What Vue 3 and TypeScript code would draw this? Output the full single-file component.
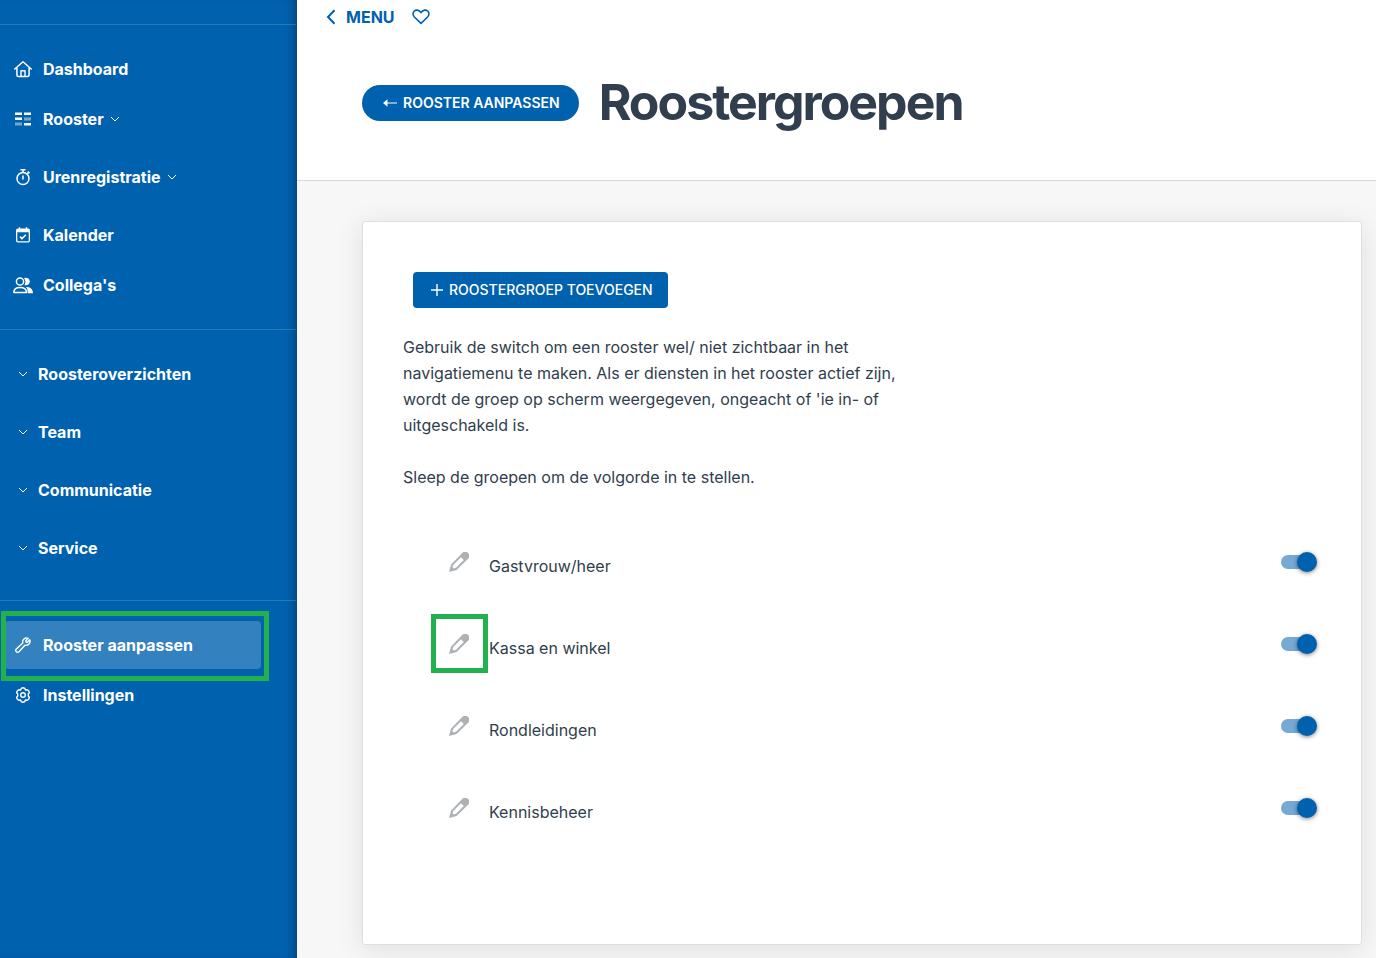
<script setup lang="ts">
import { ref } from 'vue'

interface NavItem {
  label: string
  icon: string
  expandable?: boolean
  active?: boolean
}

interface RosterGroup {
  id: string
  name: string
  visible: boolean
  marked?: boolean
}

const mainItems: NavItem[] = [
  { label: 'Dashboard', icon: 'home' },
  { label: 'Rooster', icon: 'roster', expandable: true },
  { label: 'Urenregistratie', icon: 'timer', expandable: true },
  { label: 'Kalender', icon: 'calendar' },
  { label: "Collega's", icon: 'people' },
]

const sections: string[] = ['Roosteroverzichten', 'Team', 'Communicatie', 'Service']

const adminItems: NavItem[] = [
  { label: 'Rooster aanpassen', icon: 'wrench', active: true },
  { label: 'Instellingen', icon: 'gear' },
]

const groups = ref<RosterGroup[]>([
  { id: 'gastvrouw', name: 'Gastvrouw/heer', visible: true },
  { id: 'kassa', name: 'Kassa en winkel', visible: true, marked: true },
  { id: 'rondleidingen', name: 'Rondleidingen', visible: true },
  { id: 'kennisbeheer', name: 'Kennisbeheer', visible: true },
])
</script>

<template>
  <div class="layout">
    <aside class="sidebar">
      <nav>
        <ul class="nav-list">
          <li v-for="item in mainItems" :key="item.label" :class="{ group: item.expandable }">
            <component
              :is="item.expandable ? 'button' : 'a'"
              class="nav-item"
              :href="item.expandable ? undefined : '#'"
              :type="item.expandable ? 'button' : undefined"
            >
              <span class="nav-icon">
                <svg v-if="item.icon === 'home'" width="18" height="18" viewBox="0 0 18 18" fill="none" stroke="currentColor" stroke-width="1.5" stroke-linecap="round" stroke-linejoin="round" aria-hidden="true">
                  <path d="M.8 9 9 1.8 17.200 9M2.900 7.500V15a1.500 1.500 0 0 0 1.500 1.500h9.200a1.500 1.500 0 0 0 1.500-1.500V7.500" />
                  <path d="M7 16.300v-5.500h4v5.500" stroke-width="1.400" />
                </svg>
                <svg v-else-if="item.icon === 'roster'" width="16" height="14" viewBox="0 0 16 14" fill="currentColor" aria-hidden="true">
                  <path d="M0 .5h7V3H0zM9 .5h7V3H9zM0 5.500h7V8H0zM9 11h7v2.500H9z" />
                  <path d="M9 5.500h7v3H9zM0 10.500h7v3H0z" opacity=".45" />
                </svg>
                <svg v-else-if="item.icon === 'timer'" width="16" height="18" viewBox="0 0 16 18" fill="none" stroke="currentColor" stroke-width="1.500" aria-hidden="true">
                  <circle cx="8" cy="10.500" r="6" />
                  <path d="M5.500 1.700h5M8 1.500v3M8 7.500v4M12.200 5.800l1.500-1.500M12.800 3.500l1.700 1.700" />
                </svg>
                <svg v-else-if="item.icon === 'calendar'" width="16" height="16" viewBox="0 0 16 16" fill="none" aria-hidden="true">
                  <path d="M4.500.2v2.500M11.500.2v2.500" stroke="currentColor" stroke-width="1.500" />
                  <path d="M3 1.500h10a2 2 0 0 1 2 2v10a2 2 0 0 1-2 2H3a2 2 0 0 1-2-2v-10a2 2 0 0 1 2-2zM2.300 5.200v8.200c0 .5.300.8.8.8h9.800c.5 0 .8-.3.800-.8V5.200z" fill="currentColor" fill-rule="evenodd" />
                  <path d="m5 9.600 2 2 3.800-3.700" stroke="currentColor" stroke-width="1.500" />
                </svg>
                <svg v-else width="20" height="17" viewBox="0 0 20 17" fill="none" aria-hidden="true">
                  <circle cx="7" cy="4.500" r="3.600" stroke="currentColor" stroke-width="1.500" />
                  <path d="M.8 15.500c0-3 2-5 6.200-5s6.500 2 6.500 5z" stroke="currentColor" stroke-width="1.500" stroke-linejoin="round" />
                  <path d="M11 1.200c3-1.200 5.800.6 5.800 3.400 0 2.700-2.600 4.400-5.300 3.500 1.300-1.900 1.400-4.800-.5-6.900zM13 9.900c4.500-.2 7 2.100 7 6.300h-5.300c.1-2.600-.3-4.700-1.700-6.300z" fill="currentColor" />
                </svg>
              </span>
              {{ item.label }}
              <svg v-if="item.expandable" class="caret" width="10" height="6" viewBox="0 0 10 6" fill="none" stroke="currentColor" aria-hidden="true"><path d="m1 1 4 4 4-4" /></svg>
            </component>
          </li>
        </ul>
        <ul class="nav-list">
          <li v-for="section in sections" :key="section" class="group">
            <button type="button" class="nav-item section">
              <span class="nav-icon">
                <svg width="10" height="6" viewBox="0 0 10 6" fill="none" stroke="currentColor" aria-hidden="true"><path d="m1 1 4 4 4-4" /></svg>
              </span>
              {{ section }}
            </button>
          </li>
        </ul>
        <ul class="nav-list">
          <li v-for="item in adminItems" :key="item.label" class="admin">
            <a href="#" class="nav-item" :class="{ active: item.active }">
              <span class="nav-icon">
                <svg v-if="item.icon === 'wrench'" width="16" height="16" viewBox="0 0 16 16" fill="none" stroke="currentColor" stroke-width="1.400" stroke-linejoin="round" aria-hidden="true">
                  <path d="M13.200 1.300a4 4 0 0 0-5.400 4.800L1.300 12a1.900 1.900 0 1 0 2.700 2.700l5.900-6.500a4 4 0 0 0 4.800-5.400L12.300 5.200l-1.300-.2-.2-1.300z" />
                </svg>
                <svg v-else width="16" height="16" viewBox="0 0 16 16" fill="none" stroke="currentColor" stroke-width="1.400" stroke-linejoin="round" aria-hidden="true">
                  <path d="M6.300 1.300Q8 .2 9.700 1.300L10.400 3 12.300 2.800Q14.200 3.600 14.400 5.500L13.300 7v2l1.100 1.500q-.2 1.900-2.100 2.700L10.400 13l-.7 1.700q-1.700 1.100-3.400 0L5.600 13l-1.900.2Q1.800 12.400 1.600 10.500L2.700 9V7L1.600 5.500Q1.800 3.600 3.700 2.800L5.600 3z" />
                  <circle cx="8" cy="8" r="2.300" />
                </svg>
              </span>
              {{ item.label }}
            </a>
            <span v-if="item.active" class="marker nav-marker"></span>
          </li>
        </ul>
      </nav>
    </aside>

    <main class="content">
      <header class="page-header">
        <div class="topbar">
          <button type="button" class="menu-button">
            <svg width="10" height="16" viewBox="0 0 10 16" fill="none" stroke="currentColor" stroke-width="2" aria-hidden="true"><path d="M8.500 1.200 2 8l6.500 6.800" /></svg>
            MENU
          </button>
          <button type="button" class="heart-button" aria-label="Favoriet">
            <svg width="18" height="16" viewBox="0 0 18 16" fill="none" stroke="currentColor" stroke-width="1.600" stroke-linejoin="round" aria-hidden="true">
              <path d="M9 14.300 2.400 8C.6 6.200.6 3.800 2.100 2.300 3.900.5 7.100.6 9 3.600 10.900.6 14.100.5 15.900 2.300c1.500 1.500 1.500 3.900-.3 5.700z" />
            </svg>
          </button>
        </div>
        <div class="title-row">
          <a href="#" class="back-button">
            <svg width="14" height="8" viewBox="0 0 14 8" fill="currentColor" aria-hidden="true"><path d="M0 4 4.500.3v3.100H14v1.200H4.500v3.100z" /></svg>
            ROOSTER AANPASSEN
          </a>
          <h1>Roostergroepen</h1>
        </div>
      </header>

      <section class="card">
        <button type="button" class="add-button">
          <svg width="12" height="12" viewBox="0 0 12 12" fill="none" stroke="currentColor" stroke-width="1.400" aria-hidden="true"><path d="M6 0v12M0 6h12" /></svg>
          ROOSTERGROEP TOEVOEGEN
        </button>
        <p>
          Gebruik de switch om een rooster wel/ niet zichtbaar in het navigatiemenu te maken. Als er
          diensten in het rooster actief zijn, wordt de groep op scherm weergegeven, ongeacht of 'ie
          in- of uitgeschakeld is.
        </p>
        <p>Sleep de groepen om de volgorde in te stellen.</p>
        <ul class="group-list">
          <li v-for="group in groups" :key="group.id">
            <button type="button" class="edit-button" :aria-label="`${group.name} bewerken`">
              <svg width="20" height="20" viewBox="0 0 20 20" fill="currentColor" aria-hidden="true">
                <path d="M13.200.9a3.500 3.500 0 0 1 5.900 5.900L7.600 17.900 0 20l2.100-7.600zM12 5.200 4.200 13l-.7 2.200 1.300 1.300 2.200-.7L14.800 8z" fill-rule="evenodd" />
              </svg>
              <span v-if="group.marked" class="marker edit-marker"></span>
            </button>
            <label :for="group.id">{{ group.name }}</label>
            <input :id="group.id" v-model="group.visible" type="checkbox" role="switch" class="switch" />
          </li>
        </ul>
      </section>
    </main>
  </div>
</template>

<style>
body {
  margin: 0;
  background: #f7f7f7;
}
</style>

<style scoped>
.layout {
  display: flex;
  min-height: 100vh;
  font-family: Inter, "Liberation Sans", sans-serif;
  font-size: 16px;
  color: #303e4d;
}

button {
  border: 0;
  background: none;
  font: inherit;
  color: inherit;
  cursor: pointer;
}

a {
  color: inherit;
  text-decoration: none;
}

svg {
  display: block;
  flex: none;
}

ul {
  list-style: none;
  margin: 0;
  padding: 0;
}

.sidebar {
  flex: none;
  box-sizing: border-box;
  width: 297px;
  padding-top: 24px;
  background: #0061af;
  color: #fff;
  box-shadow: inset -8px 0 8px -4px rgba(0, 0, 0, 0.26);
}

.nav-list {
  display: flex;
  flex-direction: column;
  gap: 2px;
  margin-right: 1px;
  padding: 20px 35px 20px 5px;
  border-top: 1px solid rgba(255, 255, 255, 0.16);
}

.group {
  margin-bottom: 8px;
}

.admin {
  position: relative;
}

.nav-item {
  display: flex;
  align-items: center;
  box-sizing: border-box;
  width: 100%;
  height: 48px;
  padding: 0 8px;
  border-radius: 4px;
  font-weight: 700;
  text-align: left;
}

.nav-item.active {
  background: #3381bf;
}

.nav-icon {
  display: flex;
  justify-content: center;
  width: 20px;
  margin-right: 10px;
}

.section .nav-icon {
  margin-right: 5px;
}

.caret {
  margin-left: 6px;
}

.marker {
  position: absolute;
  border: 5px solid #22b14c;
  pointer-events: none;
}

.nav-marker {
  inset: -10px -8px -12px -4px;
}

.content {
  flex: 1;
  min-width: 0;
  display: flex;
  flex-direction: column;
}

.page-header {
  padding-bottom: 47px;
  border-bottom: 1px solid #d9d9d9;
  background: #fff;
}

.topbar {
  display: flex;
  align-items: center;
  gap: 17px;
  height: 34px;
  padding-left: 29px;
  color: #0061af;
}

.menu-button {
  display: flex;
  align-items: center;
  gap: 10px;
  padding: 0;
  font-weight: 700;
}

.heart-button {
  padding: 0;
}

.title-row {
  display: flex;
  align-items: center;
  gap: 20px;
  padding: 39px 15px 0 65px;
}

.back-button {
  display: flex;
  align-items: center;
  box-sizing: border-box;
  gap: 6px;
  height: 36px;
  padding: 0 19px 1px 21px;
  border-radius: 18px;
  background: #0061af;
  color: #fff;
  font-size: 14px;
  font-weight: 600;
  white-space: nowrap;
}

h1 {
  margin: 0;
  padding-bottom: 2px;
  font-size: 50px;
  line-height: 58px;
  font-weight: 700;
  letter-spacing: -2px;
}

.card {
  flex: 1;
  margin: 40px 14px 13px 65px;
  padding: 40px;
  border: 1px solid #dfdfdf;
  border-radius: 3px;
  background: #fff;
  box-shadow: 0 4px 28px rgba(0, 0, 0, 0.1);
}

.add-button {
  display: flex;
  align-items: center;
  gap: 6px;
  height: 36px;
  margin: 10px 10px 26px;
  padding: 0 15px 1px 18px;
  border-radius: 4px;
  background: #0061af;
  color: #fff;
  font-size: 14px;
  font-weight: 500;
}

p {
  max-width: 500px;
  margin: 0 0 26px;
  line-height: 26px;
}

.group-list {
  margin-top: 31px;
}

.group-list li {
  display: flex;
  align-items: center;
  height: 82px;
}

.edit-button {
  position: relative;
  margin: 0 14px 0 40px;
  padding: 6px;
  color: #adb2b7;
}

.edit-marker {
  inset: -14px -13px -13px -12px;
}

label {
  flex: 1;
  padding-top: 8px;
}

.switch {
  appearance: none;
  position: relative;
  width: 34px;
  height: 14px;
  margin: 0 6px 0 0;
  border-radius: 7px;
  background: #b8bdc2;
  cursor: pointer;
}

.switch::before {
  content: "";
  position: absolute;
  top: -3px;
  left: -2px;
  width: 20px;
  height: 20px;
  border-radius: 50%;
  background: #fff;
  box-shadow: 0 1px 4px rgba(0, 0, 0, 0.5);
}

.switch:checked {
  background: #76a9d3;
}

.switch:checked::before {
  left: 16px;
  background: #0061af;
}
</style>
